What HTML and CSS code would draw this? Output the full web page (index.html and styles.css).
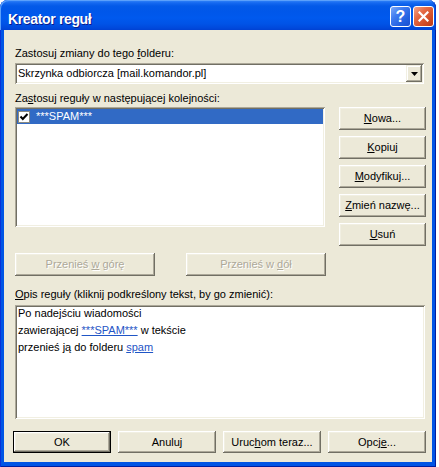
FILE: index.html
```html
<!DOCTYPE html>
<html lang="pl">
<head>
<meta charset="utf-8">
<title>Kreator reguł</title>
<link rel="stylesheet" href="styles.css">
</head>
<body>
<div class="window">
  <div class="titlebar">
    <span class="title">Kreator reguł</span>
    <div class="caption-buttons">
      <span class="cap-btn help">?</span>
      <span class="cap-btn close">
        <svg width="11" height="11" viewBox="0 0 11 11"><path d="M1.5 1.5 L9.5 9.5 M9.5 1.5 L1.5 9.5" stroke="#fff" stroke-width="2.2" stroke-linecap="square" fill="none"/></svg>
      </span>
    </div>
  </div>
  <div class="client">
    <div class="label l1">Zastosuj zmiany do tego <u>f</u>olderu:</div>
    <div class="combo sunken">
      <span class="combo-text">Skrzynka odbiorcza [mail.komandor.pl]</span>
      <span class="combo-btn"><svg width="7" height="4" viewBox="0 0 7 4"><path d="M0 0 H7 L3.5 4 Z" fill="#000"/></svg></span>
    </div>
    <div class="label l2">Za<u>s</u>tosuj reguły w następującej kolejności:</div>
    <div class="rules-row">
      <div class="listbox sunken">
        <div class="list-item selected">
          <span class="check"><svg width="12" height="12" viewBox="0 0 12 12"><rect x="0.5" y="0.5" width="11" height="11" fill="#fff" stroke="#8a8a80"/><path d="M2.5 5.5 L4.8 8 L9.5 3" stroke="#000" stroke-width="2" fill="none"/></svg></span>
          <span class="item-text">***SPAM***</span>
        </div>
      </div>
      <div class="side-buttons">
        <div class="btn side" role="button"><span><u>N</u>owa...</span></div>
        <div class="btn side" role="button"><span><u>K</u>opiuj</span></div>
        <div class="btn side" role="button"><span><u>M</u>odyfikuj...</span></div>
        <div class="btn side" role="button"><span><u>Z</u>mień nazwę...</span></div>
        <div class="btn side" role="button"><span><u>U</u>suń</span></div>
      </div>
    </div>
    <div class="move-row">
      <div class="btn move disabled" role="button"><span>Przenieś <u>w</u> górę</span></div>
      <div class="btn move disabled" role="button"><span>Przenieś w <u>d</u>ół</span></div>
    </div>
    <div class="label l3"><u>O</u>pis reguły (kliknij podkreślony tekst, by go zmienić):</div>
    <div class="desc sunken">
      <div class="desc-line">Po nadejściu wiadomości</div>
      <div class="desc-line">zawierającej <a class="rule-link">***SPAM***</a> w tekście</div>
      <div class="desc-line">przenieś ją do folderu <a class="rule-link">spam</a></div>
    </div>
    <div class="bottom-row">
      <div class="btn bottom default" role="button"><span>OK</span></div>
      <div class="btn bottom" role="button"><span>Anuluj</span></div>
      <div class="btn bottom" role="button"><span>Uruc<u>h</u>om teraz...</span></div>
      <div class="btn bottom" role="button"><span>Opcj<u>e</u>...</span></div>
    </div>
  </div>
</div>
</body>
</html>
```

FILE: styles.css
```css
html, body {
  margin: 0;
  padding: 0;
  background: #ffffff;
}

body {
  font-family: "Liberation Sans", Tahoma, Arial, sans-serif;
  font-size: 11px;
  font-weight: 400;
  color: #000;
}

.window {
  width: 436px;
  height: 467px;
  box-sizing: border-box;
  display: flex;
  flex-direction: column;
  background: #0055e5;
  border-radius: 8px 8px 0 0;
  box-shadow: inset 1px 0 #0831d9, inset -1px 0 #001ea0, inset 0 -1px #001ea0;
  padding: 0 4px 5px 4px;
}

.titlebar {
  height: 30px;
  margin: 0 -4px;
  display: flex;
  justify-content: space-between;
  align-items: flex-start;
  padding: 0 2px 0 8px;
  border-radius: 8px 8px 0 0;
  background: linear-gradient(to bottom,
    #3d8ff5 0px, #2a7df7 1px, #1468f0 3px, #035ae8 6px,
    #0057ea 12px, #0059ee 18px, #0053e6 24px, #0049dc 28px, #0041d2 30px);
  box-shadow: inset 1px 1px #5aa0fb, inset -1px 0 #0b3fc8;
}

.title {
  margin-top: 11px;
  line-height: 16px;
  font-size: 14px;
  font-weight: bold;
  letter-spacing: -0.35px;
  color: #ffffff;
  text-shadow: 1px 1px #0a1b8c;
}

.caption-buttons {
  display: flex;
  gap: 2px;
  margin-top: 6px;
}

.cap-btn {
  width: 21px;
  height: 21px;
  box-sizing: border-box;
  border: 1px solid #ffffff;
  border-radius: 3px;
  display: flex;
  align-items: center;
  justify-content: center;
}

.cap-btn.help {
  background: linear-gradient(135deg, #7eaaf7 0%, #3f7cf0 35%, #2461e0 70%, #1c50d0 100%);
  color: #ffffff;
  font-weight: bold;
  font-size: 16px;
  line-height: 19px;
}

.cap-btn.close {
  background: linear-gradient(135deg, #f2a48a 0%, #e56a45 35%, #d24d27 70%, #bb3a17 100%);
}

.client {
  flex: 1;
  background: #ece9d8;
  display: flex;
  flex-direction: column;
  padding: 0 0 0 11px;
}

.label {
  line-height: 13px;
  height: 13px;
  white-space: nowrap;
}

.l1 { margin-top: 17px; }
.l2 { margin-top: 8px; }
.l3 { margin-top: 12px; }

.sunken {
  background: #ffffff;
  box-sizing: border-box;
  padding: 2px;
  box-shadow: inset 1px 1px #aca899, inset -1px -1px #ffffff, inset 2px 2px #716f64, inset -2px -2px #f1efe2;
}

.combo {
  margin-top: 3px;
  width: 409px;
  height: 21px;
  display: flex;
  align-items: center;
}

.combo-text {
  flex: 1;
  padding-left: 1px;
  line-height: 17px;
}

.combo-btn {
  width: 16px;
  height: 17px;
  background: #ece9d8;
  display: flex;
  align-items: center;
  justify-content: center;
  box-shadow: inset -1px -1px #716f64, inset 1px 1px #f1efe2, inset -2px -2px #aca899, inset 2px 2px #ffffff;
}

.rules-row {
  margin-top: 2px;
  display: flex;
  align-items: flex-start;
}

.listbox {
  width: 310px;
  height: 120px;
}

.list-item {
  height: 15px;
  display: flex;
  align-items: center;
}

.list-item.selected {
  background: #316ac5;
  color: #ffffff;
}

.check {
  display: flex;
  margin-left: 1px;
  margin-right: 6px;
}

.item-text {
  line-height: 15px;
}

.side-buttons {
  margin-left: 14px;
  display: flex;
  flex-direction: column;
  gap: 6px;
}

.btn {
  color: #000;
  background: #ece9d8;
  height: 23px;
  box-sizing: border-box;
  display: flex;
  align-items: center;
  justify-content: center;
  white-space: nowrap;
  line-height: 13px;
  box-shadow: inset -1px -1px #716f64, inset 1px 1px #ffffff, inset -2px -2px #aca899, inset 2px 2px #f1efe2;
}

.btn.side { width: 87px; }

.move-row {
  margin-top: 7px;
  display: flex;
  gap: 31px;
}

.btn.move { width: 140px; }

.btn.disabled {
  color: #aca899;
  text-shadow: 1px 1px #ffffff;
}

.desc {
  margin-top: 4px;
  width: 410px;
  height: 114px;
  padding: 2px 3px;
  display: flex;
  flex-direction: column;
  gap: 4px;
}

.desc-line {
  line-height: 13px;
  white-space: nowrap;
}

.rule-link {
  color: #1f55c6;
  text-decoration: underline;
}

.bottom-row {
  margin-top: 12px;
  margin-left: -2px;
  display: flex;
  gap: 7px;
}

.btn.bottom {
  width: 98px;
  height: 22px;
}

.btn.default {
  box-shadow: inset 0 0 0 1px #000000, inset -2px -2px #716f64, inset 2px 2px #ffffff, inset -3px -3px #aca899, inset 3px 3px #f1efe2;
}
```
